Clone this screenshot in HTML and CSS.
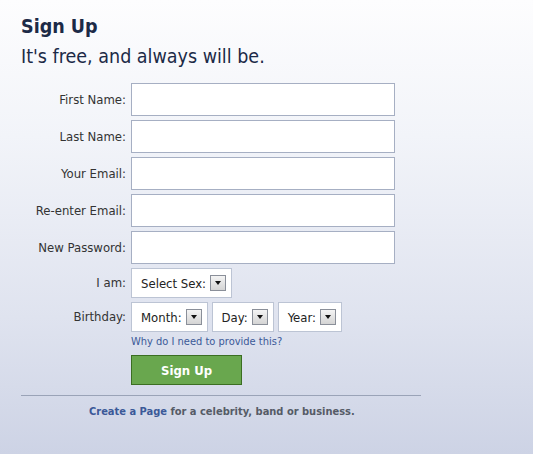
FILE: index.html
```html
<!DOCTYPE html>
<html>
<head>
<meta charset="utf-8">
<link rel="stylesheet" href="styles.css">
</head>
<body>
<div class="page">
  <h1 class="title">Sign Up</h1>
  <p class="subtitle">It's free, and always will be.</p>
  <form class="form">
    <label class="label">First Name:</label><div class="field"><span class="input"></span></div>
    <label class="label">Last Name:</label><div class="field"><span class="input"></span></div>
    <label class="label">Your Email:</label><div class="field"><span class="input"></span></div>
    <label class="label">Re-enter Email:</label><div class="field"><span class="input"></span></div>
    <label class="label">New Password:</label><div class="field"><span class="input"></span></div>
    <label class="label sel-label">I am:</label>
    <div class="field selects">
      <span class="select">Select Sex: <span class="arrow"><svg width="6" height="4" viewBox="0 0 6 4"><path d="M0 0H6L3 4Z" fill="#111"/></svg></span></span>
    </div>
    <label class="label sel-label">Birthday:</label>
    <div class="field selects">
      <span class="select">Month: <span class="arrow"><svg width="6" height="4" viewBox="0 0 6 4"><path d="M0 0H6L3 4Z" fill="#111"/></svg></span></span>
      <span class="select">Day: <span class="arrow"><svg width="6" height="4" viewBox="0 0 6 4"><path d="M0 0H6L3 4Z" fill="#111"/></svg></span></span>
      <span class="select">Year: <span class="arrow"><svg width="6" height="4" viewBox="0 0 6 4"><path d="M0 0H6L3 4Z" fill="#111"/></svg></span></span>
    </div>
    <span></span>
    <div class="field why"><a class="why-link" href="#">Why do I need to provide this?</a></div>
    <span></span>
    <div class="field"><span class="button">Sign Up</span></div>
  </form>
  <div class="rule"></div>
  <p class="create"><a class="create-link" href="#">Create a Page</a> for a celebrity, band or business.</p>
</div>
</body>
</html>
```
FILE: styles.css
```css
html, body {
  margin: 0;
  height: 100%;
}
body {
  background: linear-gradient(to bottom, #fdfdfe 0%, #f2f4f9 30%, #dfe3ef 70%, #cdd3e5 100%);
  font-family: "DejaVu Sans Condensed", "DejaVu Sans", sans-serif;
  color: #333;
}
.page {
  padding: 14px 0 0 0;
}
.title {
  margin: 0 0 0 21px;
  font-size: 19.5px;
  line-height: 26px;
  font-weight: bold;
  color: #1c2a47;
}
.subtitle {
  margin: 4px 0 0 21px;
  font-size: 19.5px;
  line-height: 26px;
  color: #1c2a47;
}
.form {
  margin-top: 13px;
  display: grid;
  grid-template-columns: 126px auto;
  column-gap: 5px;
  row-gap: 4px;
}
.label {
  text-align: right;
  font-size: 13px;
  line-height: 33px;
  color: #333;
}
.sel-label {
  line-height: 30px;
}
.field {
  display: flex;
  gap: 4px;
}
.input {
  display: block;
  width: 262px;
  height: 31px;
  background: #fff;
  border: 1px solid #a6afc3;
}
.select {
  display: flex;
  align-items: center;
  gap: 4px;
  height: 28px;
  padding: 0 5px 0 9px;
  background: #fff;
  border: 1px solid #bcc4d4;
  font-size: 13px;
  color: #222;
}
.arrow {
  display: flex;
  align-items: center;
  justify-content: center;
  width: 14px;
  height: 14px;
  border: 1px solid #8a8f99;
  background: linear-gradient(to bottom, #f4f4f4, #d4d4d4);
}
.why {
  margin-top: -1px;
}
.why-link {
  font-size: 11px;
  line-height: 13px;
  color: #3b5998;
  text-decoration: none;
}
.button {
  display: flex;
  align-items: center;
  justify-content: center;
  width: 109px;
  height: 28px;
  margin-top: 3px;
  background: #69a74e;
  border: 1px solid #3b6e22;
  color: #fff;
  font-weight: bold;
  font-size: 13px;
}
.rule {
  margin: 10px 0 0 21px;
  width: 400px;
  height: 1px;
  background: #9aa3b7;
}
.create {
  margin: 9px 0 0 0;
  padding-left: 89px;
  font-size: 11px;
  line-height: 14px;
  font-weight: bold;
  color: #555b66;
}
.create-link {
  color: #3b5998;
  text-decoration: none;
}
```
